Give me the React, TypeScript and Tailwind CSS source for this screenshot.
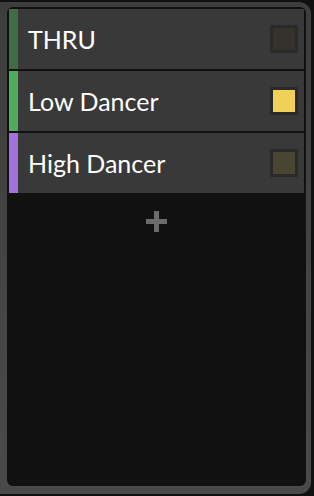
import React from "react";

const rows = [
  { name: "THRU", bar: "bg-[#3f6b45]", box: "bg-[#34322b]" },
  { name: "Low Dancer", bar: "bg-[#4fab5f]", box: "bg-[#f1d058]" },
  { name: "High Dancer", bar: "bg-[#a271dc]", box: "bg-[#4a4530]" },
];

export default function App() {
  return (
    <div className="w-[314px] h-[496px] bg-[#111111] pt-[2px] pr-[3px] pb-[2px]" style={{ fontFamily: "Lato, 'Noto Sans', sans-serif" }}>
      <div className="h-full bg-linear-to-b from-[#3d3d3d] to-[#4a4a4a] pl-[7px] pt-[5px] pr-[5px] pb-[8px] rounded-r-[12px]">
        <div className="h-full bg-[#111111] rounded-[6px] p-[2px]">
          <div className="flex flex-col gap-[2px]">
            {rows.map((r) => (
              <div key={r.name} className="h-[60px] flex items-center bg-[#393939]">
                <div className={`w-[9px] h-full ${r.bar}`} />
                <span className="ml-[10px] text-[25px] leading-none text-white">{r.name}</span>
                <div className={`ml-auto mr-[6px] w-[28px] h-[28px] border-[3px] border-[#2a2a2a] ${r.box}`} />
              </div>
            ))}
          </div>
          <div className="flex justify-center pt-[18px]">
            <svg width="21" height="21" viewBox="0 0 21 21">
              <rect x="8" y="0" width="5" height="21" fill="#6b6b6b" />
              <rect x="0" y="8" width="21" height="5" fill="#6b6b6b" />
            </svg>
          </div>
        </div>
      </div>
    </div>
  );
}
